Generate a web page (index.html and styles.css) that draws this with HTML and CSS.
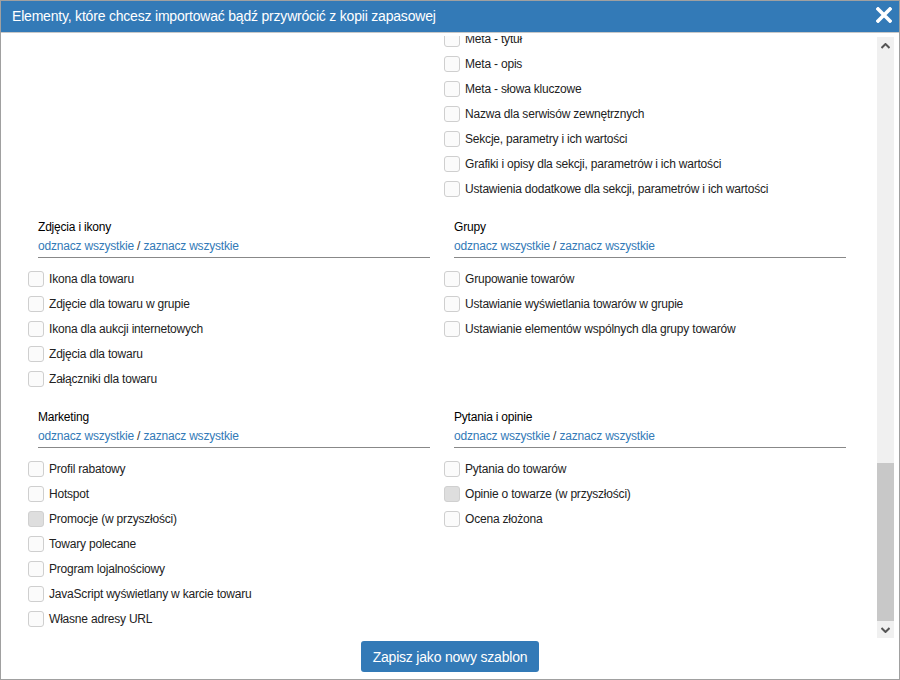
FILE: index.html
```html
<!DOCTYPE html>
<html lang="pl">
<head>
<meta charset="utf-8">
<title>Import</title>
<link rel="stylesheet" href="styles.css">
</head>
<body>
<div class="dialog">
  <div class="header">
    <span class="title">Elementy, które chcesz importować bądź przywrócić z kopii zapasowej</span>
    <span class="close"><svg width="16" height="16" viewBox="0 0 16 16"><path d="M2 2 L14 14 M14 2 L2 14" stroke="#fff" stroke-width="3.6" stroke-linecap="square"/></svg></span>
  </div>
  <div class="main">
    <div class="content">
      <div class="inner">
        <div class="section first">
          <div class="col"></div>
          <div class="col">
            <div class="row"><span class="cb"></span><span>Meta - tytuł</span></div>
            <div class="row"><span class="cb"></span><span>Meta - opis</span></div>
            <div class="row"><span class="cb"></span><span>Meta - słowa kluczowe</span></div>
            <div class="row"><span class="cb"></span><span>Nazwa dla serwisów zewnętrznych</span></div>
            <div class="row"><span class="cb"></span><span>Sekcje, parametry i ich wartości</span></div>
            <div class="row"><span class="cb"></span><span>Grafiki i opisy dla sekcji, parametrów i ich wartości</span></div>
            <div class="row"><span class="cb"></span><span>Ustawienia dodatkowe dla sekcji, parametrów i ich wartości</span></div>
          </div>
        </div>
        <div class="section">
          <div class="col">
            <div class="sec-head">
              <div class="sec-title">Zdjęcia i ikony</div>
              <div class="sec-links"><a>odznacz wszystkie</a> / <a>zaznacz wszystkie</a></div>
            </div>
            <div class="row"><span class="cb"></span><span>Ikona dla towaru</span></div>
            <div class="row"><span class="cb"></span><span>Zdjęcie dla towaru w grupie</span></div>
            <div class="row"><span class="cb"></span><span>Ikona dla aukcji internetowych</span></div>
            <div class="row"><span class="cb"></span><span>Zdjęcia dla towaru</span></div>
            <div class="row"><span class="cb"></span><span>Załączniki dla towaru</span></div>
          </div>
          <div class="col">
            <div class="sec-head">
              <div class="sec-title">Grupy</div>
              <div class="sec-links"><a>odznacz wszystkie</a> / <a>zaznacz wszystkie</a></div>
            </div>
            <div class="row"><span class="cb"></span><span>Grupowanie towarów</span></div>
            <div class="row"><span class="cb"></span><span>Ustawianie wyświetlania towarów w grupie</span></div>
            <div class="row"><span class="cb"></span><span>Ustawianie elementów wspólnych dla grupy towarów</span></div>
          </div>
        </div>
        <div class="section">
          <div class="col">
            <div class="sec-head">
              <div class="sec-title">Marketing</div>
              <div class="sec-links"><a>odznacz wszystkie</a> / <a>zaznacz wszystkie</a></div>
            </div>
            <div class="row"><span class="cb"></span><span>Profil rabatowy</span></div>
            <div class="row"><span class="cb"></span><span>Hotspot</span></div>
            <div class="row"><span class="cb disabled"></span><span>Promocje (w przyszłości)</span></div>
            <div class="row"><span class="cb"></span><span>Towary polecane</span></div>
            <div class="row"><span class="cb"></span><span>Program lojalnościowy</span></div>
            <div class="row"><span class="cb"></span><span>JavaScript wyświetlany w karcie towaru</span></div>
            <div class="row"><span class="cb"></span><span>Własne adresy URL</span></div>
          </div>
          <div class="col">
            <div class="sec-head">
              <div class="sec-title">Pytania i opinie</div>
              <div class="sec-links"><a>odznacz wszystkie</a> / <a>zaznacz wszystkie</a></div>
            </div>
            <div class="row"><span class="cb"></span><span>Pytania do towarów</span></div>
            <div class="row"><span class="cb disabled"></span><span>Opinie o towarze (w przyszłości)</span></div>
            <div class="row"><span class="cb"></span><span>Ocena złożona</span></div>
          </div>
        </div>
      </div>
    </div>
    <div class="scrollbar">
      <div class="sb-btn"><svg width="9" height="6" viewBox="0 0 9 6"><path d="M0.5 5 L4.5 1 L8.5 5" fill="none" stroke="#555" stroke-width="2"/></svg></div>
      <div class="sb-track"><div class="sb-thumb"></div></div>
      <div class="sb-btn"><svg width="9" height="6" viewBox="0 0 9 6"><path d="M0.5 1 L4.5 5 L8.5 1" fill="none" stroke="#555" stroke-width="2"/></svg></div>
    </div>
  </div>
  <div class="footer">
    <button class="btn">Zapisz jako nowy szablon</button>
  </div>
</div>
</body>
</html>
```
FILE: styles.css
```css
* { box-sizing: border-box; }
html, body { margin: 0; padding: 0; background: #fff; }
body {
  font-family: "Liberation Sans", Arial, sans-serif;
  font-size: 12px;
  color: #222;
  letter-spacing: -0.2px;
}
.dialog {
  width: 900px;
  height: 680px;
  border: 1px solid #a0a0a0;
  display: flex;
  flex-direction: column;
  background: #fff;
}
.header {
  height: 32px;
  flex: none;
  background: #337ab7;
  border-bottom: 1px solid #c8c8c8;
  color: #fff;
  display: flex;
  align-items: center;
  justify-content: space-between;
  padding: 0 7px 1px 11px;
}
.title { font-size: 14px; }
.close { display: flex; width: 16px; height: 16px; margin-top: -2px; }
.main {
  flex: 1;
  display: flex;
  min-height: 0;
}
.content {
  flex: 1;
  overflow: hidden;
  margin-top: 3px;
}
.inner { margin-top: -10px; padding-left: 27px; }
.section {
  display: grid;
  grid-template-columns: 416px 416px;
  margin-bottom: 17px;
}
.row {
  height: 25px;
  display: flex;
  align-items: center;
  gap: 5px;
  white-space: nowrap;
}
.cb {
  width: 16px;
  height: 16px;
  flex: none;
  border: 1px solid #cfcfcf;
  border-radius: 3px;
  background: #fbfbfb;
}
.cb.disabled { background: #dedede; border-color: #d0d0d0; }
.sec-head {
  margin-left: 10px;
  width: 392px;
  border-bottom: 1px solid #888;
  padding-bottom: 2px;
  margin-bottom: 8px;
}
.sec-title { line-height: 19px; color: #000; }
.sec-links { line-height: 18px; color: #333; }
.sec-links a { color: #337ab7; text-decoration: none; }
.scrollbar {
  width: 17px;
  flex: none;
  margin: 4px 5px 1px 0;
  background: #f0f0f0;
  display: flex;
  flex-direction: column;
}
.sb-btn {
  height: 17px;
  flex: none;
  display: flex;
  align-items: center;
  justify-content: center;
}
.sb-track {
  flex: 1;
  display: flex;
  flex-direction: column;
  justify-content: flex-end;
}
.sb-thumb { height: 158px; background: #c8c8c8; }
.footer {
  flex: none;
  display: flex;
  justify-content: center;
  padding: 2px 0 7px;
}
.btn {
  height: 31px;
  padding: 0 12px;
  border: none;
  border-radius: 3px;
  background: #337ab7;
  color: #fff;
  font-family: "Liberation Sans", Arial, sans-serif;
  font-size: 14px;
  letter-spacing: -0.2px;
}
```
